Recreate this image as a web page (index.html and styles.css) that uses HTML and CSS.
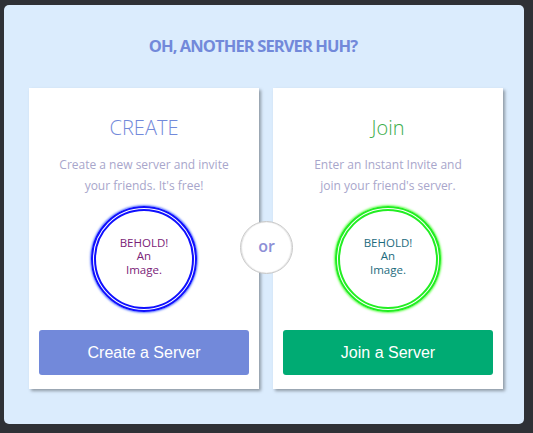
FILE: index.html
```html
<!DOCTYPE html>
<html>
<head>
<meta charset="utf-8">
<link rel="stylesheet" href="styles.css">
</head>
<body>
<div class="panel">
  <h1 class="title">OH, ANOTHER SERVER HUH?</h1>
  <div class="cards">
    <div class="card">
      <h2 class="card-title create">CREATE</h2>
      <p class="desc">Create a new server and invite<br>your friends. It's free!</p>
      <div class="pic pic-blue"><span class="alt alt-purple">BEHOLD!<br>An<br>Image.</span></div>
      <button class="btn btn-create">Create a Server</button>
    </div>
    <div class="card">
      <h2 class="card-title join">Join</h2>
      <p class="desc">Enter an Instant Invite and<br>join your friend's server.</p>
      <div class="pic pic-green"><span class="alt alt-teal">BEHOLD!<br>An<br>Image.</span></div>
      <button class="btn btn-join">Join a Server</button>
    </div>
    <div class="or">or</div>
  </div>
</div>
</body>
</html>
```
FILE: styles.css
```css
html, body {
  margin: 0;
  padding: 0;
  background: #2f3136;
  height: 433px;
  overflow: hidden;
}
body {
  padding: 5px 0 0 4px;
  box-sizing: border-box;
}
.panel {
  width: 520px;
  height: 419px;
  background: #dbecfd;
  border-radius: 5px;
  box-sizing: border-box;
  padding: 0 21px 0 25px;
}
.title {
  margin: 0;
  padding: 31px 26px 0 0;
  height: 83px;
  box-sizing: border-box;
  text-align: center;
  font-family: "Open Sans", sans-serif;
  font-weight: 700;
  font-size: 16.5px;
  letter-spacing: -0.9px;
  line-height: 20px;
  color: #7289da;
}
.cards {
  position: relative;
  display: flex;
  gap: 14px;
}
.card {
  width: 230px;
  height: 301px;
  background: #fff;
  box-shadow: 2px 2px 3px rgba(0,0,0,0.35);
  box-sizing: border-box;
  padding: 26px 10px 0;
  display: flex;
  flex-direction: column;
  align-items: center;
}
.card-title {
  margin: 0;
  font-family: "Open Sans", sans-serif;
  font-weight: 300;
  font-size: 20px;
  line-height: 28px;
  height: 28px;
}
.create { color: #7289da; }
.join { color: #3cae4c; }
.desc {
  margin: 12px 0 0;
  font-family: "Open Sans", sans-serif;
  font-size: 12px;
  line-height: 21px;
  color: #a8a6cb;
  text-align: center;
}
.pic {
  margin-top: 10px;
  width: 106px;
  height: 106px;
  box-sizing: border-box;
  border-radius: 50%;
  display: flex;
  align-items: center;
  justify-content: center;
  padding-bottom: 6px;
}
.pic-blue {
  border: 5px double #1010ff;
  box-shadow: 0 0 2px 1px rgba(40,80,255,0.7);
}
.pic-green {
  border: 5px double #22ee22;
  box-shadow: 0 0 2px 1px rgba(60,255,30,0.7);
}
.alt {
  font-family: "Open Sans", sans-serif;
  font-size: 11.5px;
  line-height: 13.5px;
  text-align: center;
}
.alt-purple { color: #7a2277; }
.alt-teal { color: #1d6b7d; }
.btn {
  margin-top: 18px;
  width: 210px;
  height: 45px;
  border: none;
  border-radius: 3px;
  color: #fff;
  font-family: "Liberation Sans", Arial, sans-serif;
  font-size: 16px;
  cursor: pointer;
}
.btn-create { background: #7289da; }
.btn-join { background: #00ab73; }
.or {
  position: absolute;
  left: 211px;
  top: 133px;
  width: 53px;
  height: 53px;
  box-sizing: border-box;
  border-radius: 50%;
  background: #fff;
  border: 1px solid #c8c8c8;
  box-shadow: inset 1px 0 1px rgba(0,0,0,0.12), inset -1px 0 1px rgba(0,0,0,0.12);
  display: flex;
  align-items: center;
  justify-content: center;
  font-family: "Open Sans", sans-serif;
  font-weight: 600;
  font-size: 16px;
  color: #8d8fd6;
  padding-bottom: 3px;
}
```
